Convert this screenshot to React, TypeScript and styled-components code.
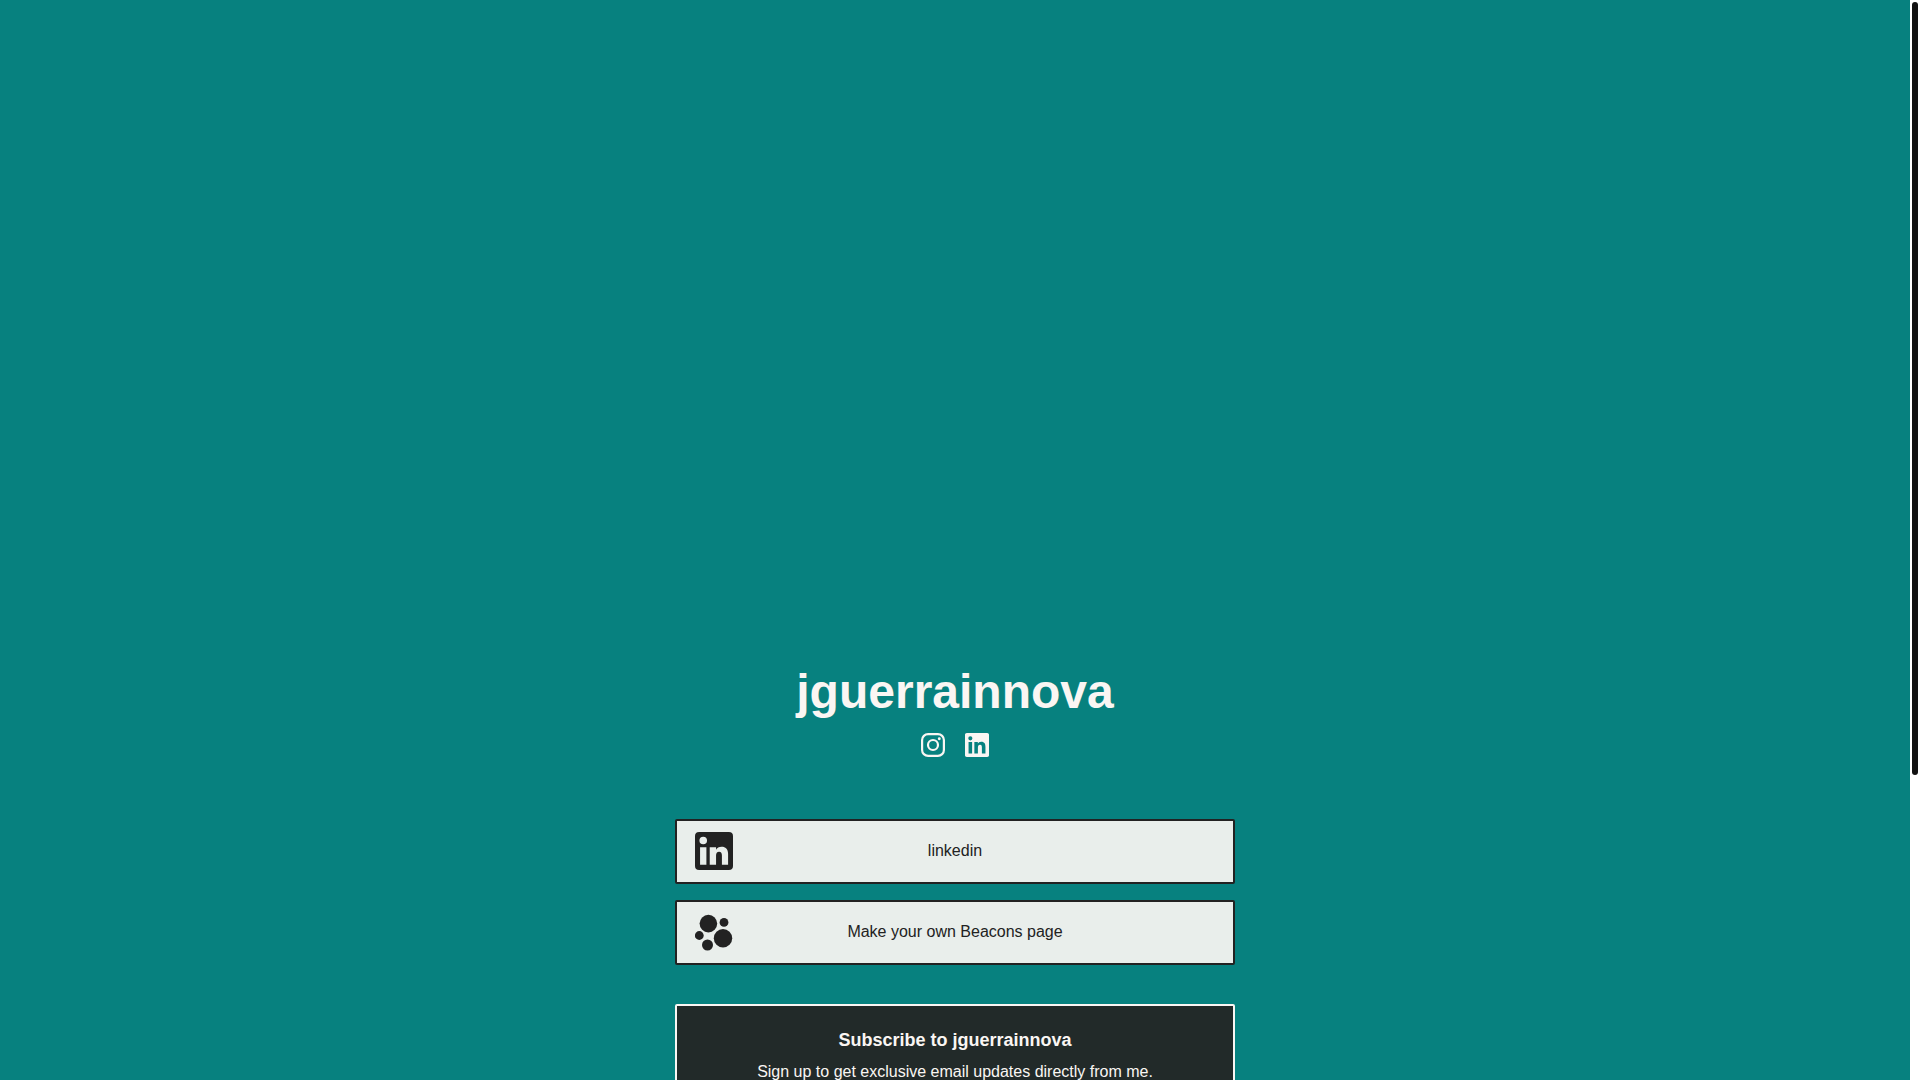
import React from "react";
import styled, { createGlobalStyle } from "styled-components";

const GlobalStyle = createGlobalStyle`
  * { box-sizing: border-box; }
  body {
    margin: 0;
    background: #07817f;
    font-family: "Liberation Sans", Arial, sans-serif;
    font-size: 16px;
    line-height: 24px;
  }
`;

const Viewport = styled.div`
  display: flex;
  height: 100vh;
  overflow: hidden;
`;

const Page = styled.main`
  flex: 1;
  display: flex;
  flex-direction: column;
  align-items: center;
  overflow: hidden;
  padding: 60vh 16px 0;
  background: #07817f;
  color: #faf6f3;
`;

const Rail = styled.div`
  flex: none;
  width: 10px;
  padding: 2px;
  background: #ffffff;
`;

const Thumb = styled.div`
  height: 773px;
  border-radius: 3px;
  background: #111111;
`;

const Profile = styled.header`
  flex: none;
  display: flex;
  flex-direction: column;
  align-items: center;
  gap: 11px;
  padding-top: 14px;
`;

const Name = styled.h1`
  margin: 0;
  font-size: 48px;
  line-height: 60px;
`;

const Socials = styled.nav`
  display: flex;
  gap: 20px;
`;

const SocialLink = styled.a`
  display: flex;
  color: inherit;
`;

const Links = styled.section`
  flex: none;
  display: flex;
  flex-direction: column;
  gap: 16px;
  width: 100%;
  max-width: 560px;
  margin-top: 62px;
`;

const LinkCard = styled.a`
  display: grid;
  grid-template-columns: 38px 1fr 38px;
  align-items: center;
  height: 65px;
  padding: 0 18px 1px;
  border: 2px solid #222222;
  border-radius: 2px;
  background: #e9eeeb;
  color: #222222;
  text-align: center;
  text-decoration: none;
`;

const Subscribe = styled.section`
  flex: none;
  width: 100%;
  max-width: 560px;
  margin-top: 39px;
  padding: 20px 24px;
  border: 2px solid #faf6f3;
  border-radius: 2px;
  background: #222a29;
  text-align: center;
`;

const SubscribeTitle = styled.h2`
  margin: 0;
  font-size: 18px;
  line-height: 28px;
`;

const SubscribeText = styled.p`
  margin: 6px 0 0;
`;

const InstagramIcon = () => (
  <svg width="24" height="24" viewBox="0 0 24 24" fill="none" stroke="currentColor" aria-hidden="true">
    <rect x="1.1" y="1.1" width="21.8" height="21.8" rx="6" strokeWidth="2.2" />
    <circle cx="12" cy="12" r="5" strokeWidth="2.2" />
    <circle cx="18.3" cy="5.7" r="1.45" fill="currentColor" stroke="none" />
  </svg>
);

const LinkedinIcon = ({ size }: { size: number }) => (
  <svg width={size} height={size} viewBox="0 0 24 24" fill="currentColor" aria-hidden="true">
    <path
      fillRule="evenodd"
      d={
        size > 30
          ? "M2.6 0h18.8a2.6 2.6 0 0 1 2.6 2.6v18.8a2.6 2.6 0 0 1-2.6 2.6H2.6a2.6 2.6 0 0 1-2.6-2.6V2.6a2.6 2.6 0 0 1 2.6-2.6zM5.2 3a2.4 2.4 0 1 0 0 4.8 2.4 2.4 0 0 0 0-4.8zM3.2 9.6v11.1h4V9.6zM9.3 9.6v11.1h4v-5.8c0-1.6.6-2.5 1.9-2.5s1.8 1 1.8 2.5v5.8h3.9v-6.9c0-3-1.6-4.5-4.1-4.5-1.7 0-2.9.8-3.5 1.9V9.6z"
          : "M1.77 0h20.46C23.2 0 24 .8 24 1.72v20.56c0 .95-.8 1.72-1.77 1.72H1.77C.8 24 0 23.23 0 22.28V1.72C0 .8.8 0 1.77 0zM5.34 3.3a2.06 2.06 0 1 0 0 4.13 2.06 2.06 0 0 0 0-4.13zM3.56 9v11.45h3.56V9zM9.35 9v11.45h3.55v-5.6c0-1.5.3-3 2.13-3s1.86 1.7 1.86 3.05v5.55h3.56v-6.3c0-3.1-.7-5.45-4.3-5.45-1.7 0-2.85.95-3.33 1.85V9z"
      }
    />
  </svg>
);

const BeaconsIcon = () => (
  <svg width="38" height="38" viewBox="0 0 38 38" fill="currentColor" aria-hidden="true">
    <circle cx="13.4" cy="10.6" r="8.8" />
    <circle cx="29" cy="9.4" r="4.4" />
    <circle cx="4.3" cy="22.5" r="4.4" />
    <circle cx="28" cy="25.3" r="9.2" />
    <circle cx="12.5" cy="32" r="5.5" />
  </svg>
);

export default function App() {
  return (
    <Viewport>
      <GlobalStyle />
      <Page>
        <Profile>
          <Name>jguerrainnova</Name>
          <Socials>
            <SocialLink href="#instagram" aria-label="Instagram">
              <InstagramIcon />
            </SocialLink>
            <SocialLink href="#linkedin" aria-label="LinkedIn">
              <LinkedinIcon size={24} />
            </SocialLink>
          </Socials>
        </Profile>
        <Links>
          <LinkCard href="#linkedin">
            <LinkedinIcon size={38} />
            <span>linkedin</span>
          </LinkCard>
          <LinkCard href="#beacons">
            <BeaconsIcon />
            <span>Make your own Beacons page</span>
          </LinkCard>
        </Links>
        <Subscribe>
          <SubscribeTitle>Subscribe to jguerrainnova</SubscribeTitle>
          <SubscribeText>Sign up to get exclusive email updates directly from me.</SubscribeText>
        </Subscribe>
      </Page>
      <Rail>
        <Thumb />
      </Rail>
    </Viewport>
  );
}
